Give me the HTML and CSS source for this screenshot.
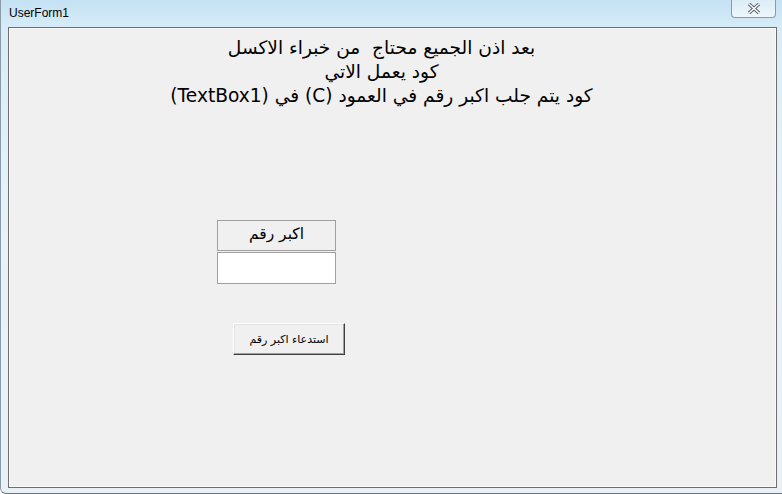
FILE: index.html
```html
<!DOCTYPE html>
<html lang="ar">
<head>
    <meta charset="UTF-8">
    <title>UserForm1</title>
    <link rel="stylesheet" href="styles.css">
</head>
<body>
    <div class="window">
        <div class="titlebar">
            <span class="title">UserForm1</span>
            <button class="close-btn" aria-label="close">
                <svg width="14" height="11" viewBox="0 0 14 11">
                    <path d="M2 1 L12 10 M12 1 L2 10" stroke="#5a6470" stroke-width="3.4" fill="none"/>
                    <path d="M2 1 L12 10 M12 1 L2 10" stroke="#ffffff" stroke-width="1.4" fill="none"/>
                </svg>
            </button>
        </div>
        <div class="client">
            <div class="heading" dir="rtl">
                <p>بعد اذن الجميع محتاج&nbsp; من خبراء الاكسل</p>
                <p>كود يعمل الاتي</p>
                <p>كود يتم جلب اكبر رقم في العمود (C) في (TextBox1)</p>
            </div>
            <div class="controls">
                <div class="label-box" dir="rtl">اكبر رقم</div>
                <input type="text" class="text-box">
                <button class="form-btn" dir="rtl">استدعاء اكبر رقم</button>
            </div>
        </div>
    </div>
</body>
</html>
```

FILE: styles.css
```css
body {
    margin: 0;
    padding: 0;
    font-family: "DejaVu Sans", Tahoma, sans-serif;
}
.window {
    width: 782px;
    height: 494px;
    box-sizing: border-box;
    background: linear-gradient(to bottom, #c4e2f3 0px, #d8edf8 30px, #e6f2f9 200px, #e9f1f6 494px);
    border-left: 1px solid #8a9aa8;
    border-bottom: 1px solid #6b7782;
    border-bottom-left-radius: 6px;
    display: flex;
    flex-direction: column;
}
.titlebar {
    height: 27px;
    display: flex;
    justify-content: space-between;
    align-items: flex-start;
}
.title {
    font-family: "Liberation Sans", Arial, sans-serif;
    font-size: 12px;
    color: #000;
    padding: 6px 0 0 8px;
}
.close-btn {
    width: 45px;
    height: 18px;
    margin-right: 6px;
    padding: 0;
    border: 1px solid #8b99a8;
    border-top: none;
    border-radius: 0 0 4px 4px;
    background: linear-gradient(to bottom, #dcecf6, #eef6fb);
    display: flex;
    align-items: center;
    justify-content: center;
}
.client {
    margin: 0 5px 5px 7px;
    flex: 1;
    background-color: #f0f0f0;
    border: 1px solid #6e6e6e;
    box-shadow: inset 0 0 0 1px #fafafa;
}
.heading {
    text-align: center;
    font-size: 18.6px;
    padding: 8px 22px 0 0;
    color: #000;
}
.heading p {
    margin: 0;
    line-height: 24px;
}
.controls {
    margin: 112px 0 0 208px;
    display: flex;
    flex-direction: column;
    align-items: flex-start;
}
.label-box {
    width: 117px;
    height: 29px;
    border: 1px solid #a0a0a0;
    background-color: #f0f0f0;
    font-size: 15.5px;
    line-height: 27px;
    text-align: center;
}
.text-box {
    margin: 1px 0 0 0;
    padding: 0;
    box-sizing: border-box;
    width: 119px;
    height: 32px;
    border: 1px solid #a0a0a0;
    background-color: #fff;
}
.form-btn {
    margin: 39px 0 0 16px;
    width: 112px;
    height: 32px;
    padding: 0;
    font-family: "DejaVu Sans", Tahoma, sans-serif;
    font-size: 11px;
    color: #000;
    background-color: #f0f0f0;
    border: 1px solid;
    border-color: #ffffff #404040 #404040 #ffffff;
    box-shadow: inset -1px -1px 0 #a0a0a0, inset 1px 1px 0 #e3e3e3;
}
```
